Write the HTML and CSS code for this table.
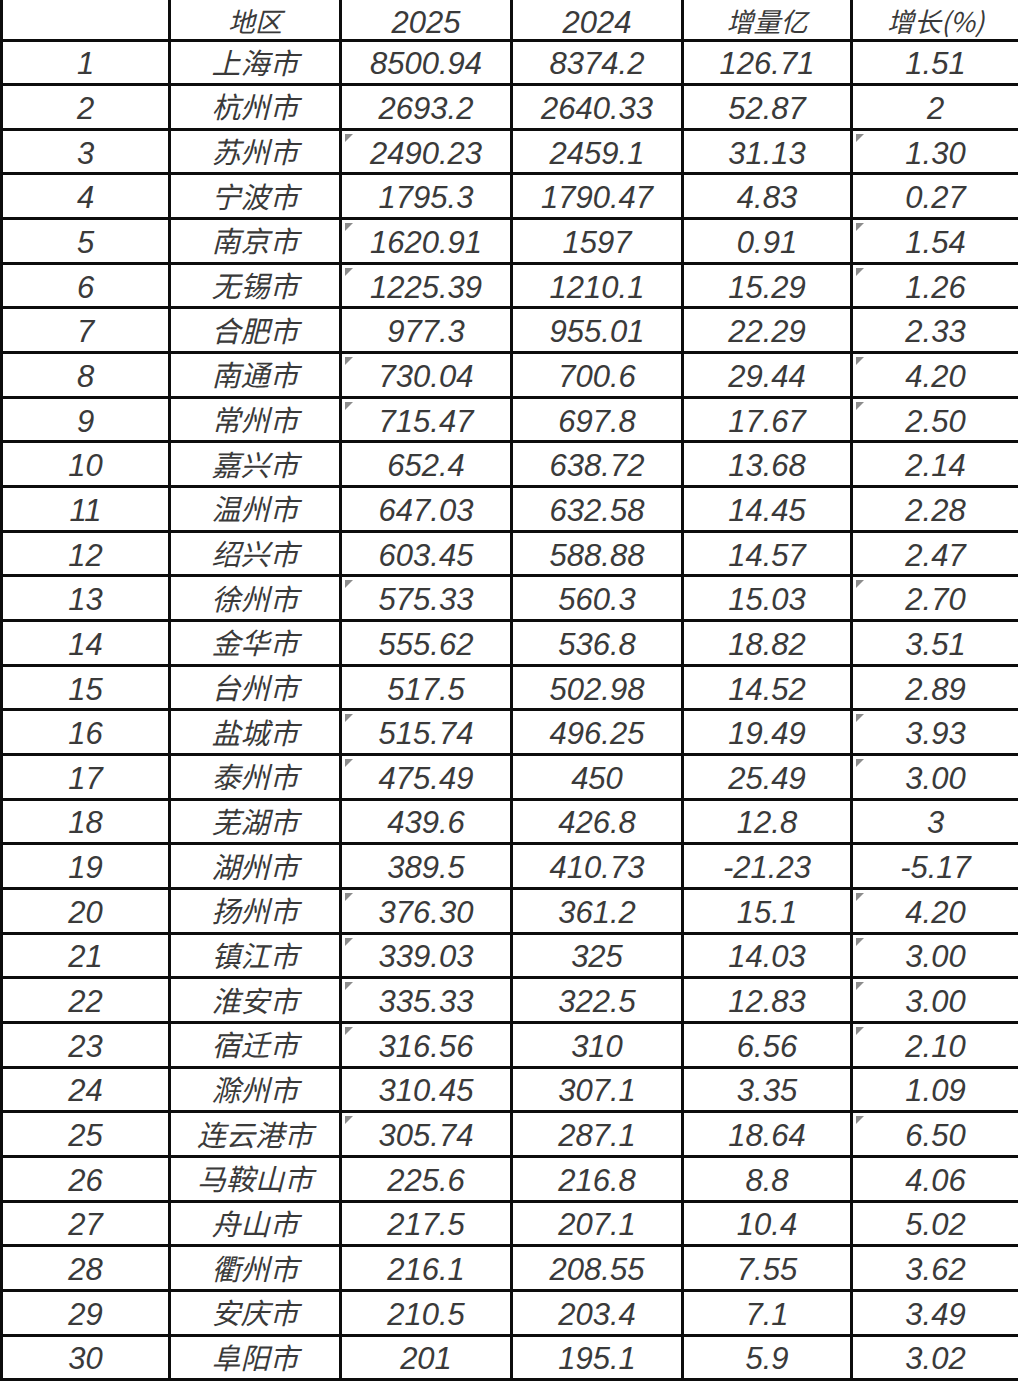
FILE: index.html
```html
<!DOCTYPE html>
<html lang="zh">
<head>
<meta charset="utf-8">
<title>城市数据</title>
<link rel="stylesheet" href="styles.css">
</head>
<body>
<table class="sheet">
<colgroup>
<col class="c-rank"><col class="c-city"><col class="c-num"><col class="c-num"><col class="c-inc"><col class="c-pct">
</colgroup>
<thead>
<tr class="head"><th></th><th class="cjk">地区</th><th>2025</th><th>2024</th><th class="cjk">增量亿</th><th class="cjk">增长(%)</th></tr>
</thead>
<tbody>
<tr><td>1</td><td class="cjk">上海市</td><td>8500.94</td><td>8374.2</td><td>126.71</td><td>1.51</td></tr>
<tr><td>2</td><td class="cjk">杭州市</td><td>2693.2</td><td>2640.33</td><td>52.87</td><td>2</td></tr>
<tr><td>3</td><td class="cjk">苏州市</td><td class="mark">2490.23</td><td>2459.1</td><td>31.13</td><td class="mark">1.30</td></tr>
<tr><td>4</td><td class="cjk">宁波市</td><td>1795.3</td><td>1790.47</td><td>4.83</td><td>0.27</td></tr>
<tr><td>5</td><td class="cjk">南京市</td><td class="mark">1620.91</td><td>1597</td><td>0.91</td><td class="mark">1.54</td></tr>
<tr><td>6</td><td class="cjk">无锡市</td><td class="mark">1225.39</td><td>1210.1</td><td>15.29</td><td class="mark">1.26</td></tr>
<tr><td>7</td><td class="cjk">合肥市</td><td>977.3</td><td>955.01</td><td>22.29</td><td>2.33</td></tr>
<tr><td>8</td><td class="cjk">南通市</td><td class="mark">730.04</td><td>700.6</td><td>29.44</td><td class="mark">4.20</td></tr>
<tr><td>9</td><td class="cjk">常州市</td><td class="mark">715.47</td><td>697.8</td><td>17.67</td><td class="mark">2.50</td></tr>
<tr><td>10</td><td class="cjk">嘉兴市</td><td>652.4</td><td>638.72</td><td>13.68</td><td>2.14</td></tr>
<tr><td>11</td><td class="cjk">温州市</td><td>647.03</td><td>632.58</td><td>14.45</td><td>2.28</td></tr>
<tr><td>12</td><td class="cjk">绍兴市</td><td>603.45</td><td>588.88</td><td>14.57</td><td>2.47</td></tr>
<tr><td>13</td><td class="cjk">徐州市</td><td class="mark">575.33</td><td>560.3</td><td>15.03</td><td class="mark">2.70</td></tr>
<tr><td>14</td><td class="cjk">金华市</td><td>555.62</td><td>536.8</td><td>18.82</td><td>3.51</td></tr>
<tr><td>15</td><td class="cjk">台州市</td><td>517.5</td><td>502.98</td><td>14.52</td><td>2.89</td></tr>
<tr><td>16</td><td class="cjk">盐城市</td><td class="mark">515.74</td><td>496.25</td><td>19.49</td><td class="mark">3.93</td></tr>
<tr><td>17</td><td class="cjk">泰州市</td><td class="mark">475.49</td><td>450</td><td>25.49</td><td class="mark">3.00</td></tr>
<tr><td>18</td><td class="cjk">芜湖市</td><td>439.6</td><td>426.8</td><td>12.8</td><td>3</td></tr>
<tr><td>19</td><td class="cjk">湖州市</td><td>389.5</td><td>410.73</td><td>-21.23</td><td>-5.17</td></tr>
<tr><td>20</td><td class="cjk">扬州市</td><td class="mark">376.30</td><td>361.2</td><td>15.1</td><td class="mark">4.20</td></tr>
<tr><td>21</td><td class="cjk">镇江市</td><td class="mark">339.03</td><td>325</td><td>14.03</td><td class="mark">3.00</td></tr>
<tr><td>22</td><td class="cjk">淮安市</td><td class="mark">335.33</td><td>322.5</td><td>12.83</td><td class="mark">3.00</td></tr>
<tr><td>23</td><td class="cjk">宿迁市</td><td class="mark">316.56</td><td>310</td><td>6.56</td><td class="mark">2.10</td></tr>
<tr><td>24</td><td class="cjk">滁州市</td><td>310.45</td><td>307.1</td><td>3.35</td><td>1.09</td></tr>
<tr><td>25</td><td class="cjk">连云港市</td><td class="mark">305.74</td><td>287.1</td><td>18.64</td><td class="mark">6.50</td></tr>
<tr><td>26</td><td class="cjk">马鞍山市</td><td>225.6</td><td>216.8</td><td>8.8</td><td>4.06</td></tr>
<tr><td>27</td><td class="cjk">舟山市</td><td>217.5</td><td>207.1</td><td>10.4</td><td>5.02</td></tr>
<tr><td>28</td><td class="cjk">衢州市</td><td>216.1</td><td>208.55</td><td>7.55</td><td>3.62</td></tr>
<tr><td>29</td><td class="cjk">安庆市</td><td>210.5</td><td>203.4</td><td>7.1</td><td>3.49</td></tr>
<tr><td>30</td><td class="cjk">阜阳市</td><td>201</td><td>195.1</td><td>5.9</td><td>3.02</td></tr>
</tbody>
</table>
</body>
</html>
```
FILE: styles.css
```css
html, body {
  margin: 0;
  padding: 0;
  background: #fff;
}

.sheet {
  width: 1018px;
  border-collapse: collapse;
  table-layout: fixed;
  font-family: "Liberation Sans", "Noto Sans CJK SC", sans-serif;
  font-style: italic;
  font-size: 31px;
  color: #3a3a3a;
}

.c-rank { width: 168px; }
.c-city { width: 171px; }
.c-num { width: 171px; }
.c-inc { width: 169px; }
.c-pct { width: 168px; }

.sheet th,
.sheet td {
  border: 3px solid #0d0d0d;
  padding: 0;
  text-align: center;
  vertical-align: middle;
  font-weight: normal;
  line-height: 1;
  position: relative;
}

.sheet tr.head {
  height: 40px;
}

.sheet tr.head th {
  border-top: none;
  vertical-align: top;
  padding-top: 7px;
}

.sheet tr.head th.cjk {
  font-size: 27px;
  padding-top: 7px;
}

.sheet tbody tr {
  height: 44.67px;
}

.sheet td {
  padding-top: 3px;
}

.sheet td.cjk {
  padding-top: 0;
  padding-bottom: 2px;
}

.cjk {
  font-family: "Noto Sans CJK SC", sans-serif;
  font-size: 29px;
}

.mark::before {
  content: "";
  position: absolute;
  left: 3px;
  top: 3px;
  width: 0;
  height: 0;
  border-top: 8px solid #8c8c8c;
  border-right: 8px solid transparent;
}
```
